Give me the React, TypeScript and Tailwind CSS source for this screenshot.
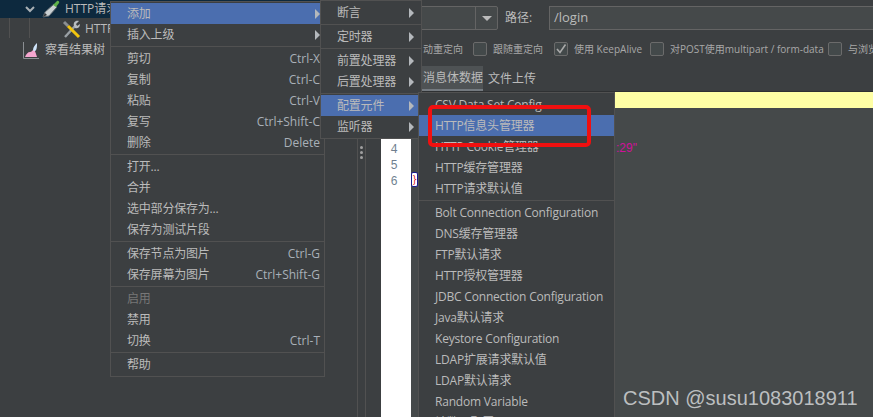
const font = { cjk: 'font-["Open_Sans","Noto_Sans_CJK_SC",sans-serif]' };

type Row =
  | { sep: true }
  | { label: string; key?: string; arrow?: boolean; active?: boolean; disabled?: boolean };

const mainMenu: Row[] = [
  { label: '添加', arrow: true, active: true },
  { label: '插入上级', arrow: true },
  { sep: true },
  { label: '剪切', key: 'Ctrl-X' },
  { label: '复制', key: 'Ctrl-C' },
  { label: '粘贴', key: 'Ctrl-V' },
  { label: '复写', key: 'Ctrl+Shift-C' },
  { label: '删除', key: 'Delete' },
  { sep: true },
  { label: '打开...' },
  { label: '合并' },
  { label: '选中部分保存为...' },
  { label: '保存为测试片段' },
  { sep: true },
  { label: '保存节点为图片', key: 'Ctrl-G' },
  { label: '保存屏幕为图片', key: 'Ctrl+Shift-G' },
  { sep: true },
  { label: '启用', disabled: true },
  { label: '禁用' },
  { label: '切换', key: 'Ctrl-T' },
  { sep: true },
  { label: '帮助' },
];

const addMenu: Row[] = [
  { label: '断言', arrow: true },
  { sep: true },
  { label: '定时器', arrow: true },
  { sep: true },
  { label: '前置处理器', arrow: true },
  { label: '后置处理器', arrow: true },
  { sep: true },
  { label: '配置元件', arrow: true, active: true },
  { label: '监听器', arrow: true },
];

const configMenu: Row[] = [
  { label: 'CSV Data Set Config' },
  { label: 'HTTP信息头管理器', active: true },
  { label: 'HTTP Cookie管理器' },
  { label: 'HTTP缓存管理器' },
  { label: 'HTTP请求默认值' },
  { sep: true },
  { label: 'Bolt Connection Configuration' },
  { label: 'DNS缓存管理器' },
  { label: 'FTP默认请求' },
  { label: 'HTTP授权管理器' },
  { label: 'JDBC Connection Configuration' },
  { label: 'Java默认请求' },
  { label: 'Keystore Configuration' },
  { label: 'LDAP扩展请求默认值' },
  { label: 'LDAP默认请求' },
  { label: 'Random Variable' },
  { label: '计数器配置' },
];

function Menu({ rows, className, pad }: { rows: Row[]; className: string; pad: string }) {
  return (
    <div className={`absolute flex flex-col border border-[#515151] bg-[#3c3f41] py-px tracking-[-0.2px] ${className}`}>
      {rows.map((r, i) =>
        'sep' in r ? (
          <div key={i} className="h-[3px] shrink-0 flex items-center">
            <div className="h-px w-full bg-[#515151]" />
          </div>
        ) : (
          <div
            key={i}
            className={`h-[21px] shrink-0 flex items-center justify-between whitespace-nowrap ${pad} ${
              r.active ? 'bg-[#4b6eaf]' : ''
            } ${r.disabled ? 'text-[#777777]' : 'text-[#bbbbbb]'}`}
          >
            <span>{r.label}</span>
            {r.key && <span className="text-[#a9b0b8] tracking-[0px]">{r.key}</span>}
            {r.arrow && (
              <span className="w-0 h-0 border-y-[5px] border-y-transparent border-l-[5px] border-l-[#b4b8bc]" />
            )}
          </div>
        ),
      )}
    </div>
  );
}

function Check({ checked }: { checked?: boolean }) {
  return (
    <span className="w-[14px] h-[14px] shrink-0 rounded-[2px] border border-[#6b6b6b] bg-[#43494a] flex items-center justify-center">
      {checked && (
        <svg width="12" height="12" viewBox="0 0 12 12" fill="none">
          <path d="M2 6l3 3.5L10.5 1.5" stroke="#a9a9a9" strokeWidth="1.6" />
        </svg>
      )}
    </span>
  );
}

function PenIcon() {
  return (
    <svg width="19" height="18" viewBox="0 0 19 18" className="shrink-0">
      <path d="M1 17l2-5L12 4l3 3-8 9z" fill="#c9cfd2" stroke="#59636a" strokeWidth="1" />
      <path d="M11 5l4-4c1-1 3 1 2 2l-3 4z" fill="#5fb14a" />
      <path d="M1 17l2-4 2 2z" fill="#2e3234" />
    </svg>
  );
}

function ToolsIcon() {
  return (
    <svg width="19" height="19" viewBox="0 0 19 19" className="shrink-0">
      <path d="M3 17L14 5" stroke="#9aa0a5" strokeWidth="2.4" />
      <path d="M12 6c-1-3 1-6 5-5l-3 3 1 2 3-2c0 4-3 5-5 4z" fill="#b8bcc0" />
      <path d="M2 2l4 4" stroke="#8b8f93" strokeWidth="3" />
      <path d="M6 6l11 11" stroke="#f1c40f" strokeWidth="3" />
    </svg>
  );
}

function ListenerIcon() {
  return (
    <svg width="16" height="17" viewBox="0 0 16 17" className="shrink-0">
      <path d="M0.5 0v16.5H16" stroke="#8b8f93" fill="none" />
      <path d="M2 15c1-3 3-5 5-5 2 0 2-2 4-2 1 0 2 4 3 7z" fill="#f5a6cf" />
      <path d="M10 8c0-3 2-5 4-7 0 3 0 7-2 8-1 0-2 0-2-1z" fill="#cfe4fa" />
    </svg>
  );
}

export default function App() {
  return (
    <div className={`relative w-[873px] h-[417px] overflow-hidden flex bg-[#3c3f41] text-[12px] text-[#bbbbbb] ${font.cjk}`}>
      {/* Tree */}
      <div className="relative w-[357px] shrink-0 flex flex-col">
        <div className="h-[18px] flex items-center bg-[#0d293e] pl-[25px] gap-[8px]">
          <svg width="10" height="7" viewBox="0 0 10 7" className="shrink-0">
            <path d="M1 1l4 4 4-4" stroke="#a9b0b5" strokeWidth="2" fill="none" />
          </svg>
          <div className="flex items-center gap-[4px] -ml-px">
            <PenIcon />
            <span>HTTP请求</span>
          </div>
        </div>
        <div className="h-[20px] flex items-center pl-[62px] gap-[4px] mt-px">
          <ToolsIcon />
          <span>HTTP信息头管理器</span>
        </div>
        <div className="h-[20px] flex items-center pl-[23px] gap-[6px] mt-px">
          <ListenerIcon />
          <span>察看结果树</span>
        </div>
        <div className="absolute left-[9px] top-[18px] w-px h-[20px] bg-[#515151]" />
        <div className="absolute left-[29px] top-[18px] w-px h-[20px] bg-[#515151]" />
      </div>

      {/* Request panel */}
      <div className="flex-1 min-w-0 flex flex-col">
        <div className="h-[92px] shrink-0 flex flex-col border-b border-[#2f3133]">
          <div className="mt-[6px] h-[24px] flex items-center">
            <div className="ml-[3px] w-[138px] h-full flex justify-end rounded-[2px] border border-[#646464] bg-[#45494a]">
              <div className="w-[22px] border-l border-[#646464] flex items-center justify-center">
                <span className="w-0 h-0 border-x-[5px] border-x-transparent border-t-[5px] border-t-[#bbbbbb]" />
              </div>
            </div>
            <span className="ml-[7px] w-[44px] whitespace-nowrap">路径:</span>
            <div className="flex-1 h-full -mr-1 border border-[#646464] bg-[#45494a] pl-[4px] flex items-center text-[13px]">
              /login
            </div>
          </div>
          <div className="mt-[11px] h-[14px] flex items-center text-[10px] whitespace-nowrap text-[#a8a8a8] translate-y-px">
            <span className="ml-[66px] w-[50px] shrink-0">动重定向</span>
            <Check />
            <span className="ml-[6px] w-[61px] shrink-0">跟随重定向</span>
            <Check checked />
            <span className="ml-[6px] w-[76px] shrink-0">使用 KeepAlive</span>
            <Check />
            <span className="ml-[6px] w-[158px] shrink-0">对POST使用multipart / form-data</span>
            <Check />
            <span className="ml-[6px] shrink-0">与浏览器兼容的头</span>
          </div>
          <div className="mt-[11px] flex-1 flex items-stretch">
            <div className="ml-[65px] w-[61px] bg-[#4e5254] border-b-2 border-[#747a80] flex items-center pl-px whitespace-nowrap overflow-hidden">
              消息体数据
            </div>
            <div className="ml-[5px] flex items-center">文件上传</div>
          </div>
        </div>

        <div className="flex-1 flex min-h-0">
          <div className="w-[9px] shrink-0 border-x border-[#515151] flex flex-col items-center pt-[54px] gap-[2px]">
            <span className="w-[3px] h-[3px] rounded-full bg-[#a0a0a0]" />
            <span className="w-[3px] h-[3px] rounded-full bg-[#a0a0a0]" />
            <span className="w-[3px] h-[3px] rounded-full bg-[#a0a0a0]" />
          </div>
          <div className="w-[15px] shrink-0" />
          <div className="w-[30px] shrink-0 bg-white pt-[2px] text-[#6f7f8f] text-[12px] flex flex-col items-center font-['Liberation_Mono',monospace]">
            {[1, 2, 3, 4, 5, 6].map((n) => (
              <div key={n} className="h-[16px] leading-[16px] -translate-x-[2px]">
                {n}
              </div>
            ))}
          </div>
          <div className="w-[7px] shrink-0 bg-[#45494a] pt-[80px]">
            <div className="h-[15px] bg-white border border-[#1a1a8c] rounded-[2px] text-[#e01010] text-[10px] leading-[12px] text-center overflow-hidden">
              {'}'}
            </div>
          </div>
          <div className="flex-1 bg-[#45494a] flex flex-col">
            <div className="h-[16px] bg-[#ffffa5]" />
            <div className="mt-[32px] h-[16px] pl-[198px] text-[12px] leading-[16px] text-[#d0109a] font-['Liberation_Sans',sans-serif] whitespace-nowrap">
              :29"
            </div>
          </div>
        </div>
      </div>

      <Menu rows={mainMenu} pad="pl-[16px] pr-[4px]" className="left-[110px] top-px w-[215px] z-10" />
      <Menu rows={addMenu} pad="pl-[16px] pr-[7px]" className="left-[320px] top-0 w-[102px] z-20" />
      <Menu rows={configMenu} pad="pl-[16px] pr-[4px]" className="left-[418px] top-[92px] w-[197px] z-30" />

      {/* Red annotation box */}
      <div className="absolute left-[428px] top-[105px] w-[163px] h-[42px] rounded-[5px] border-[4px] border-[#f01010] z-40" />

      <div className="absolute left-[623px] top-[387px] text-[20px] leading-[22px] text-[#bcbfc0] font-['Liberation_Sans',sans-serif] whitespace-nowrap z-40">
        CSDN @susu1083018911
      </div>
    </div>
  );
}
